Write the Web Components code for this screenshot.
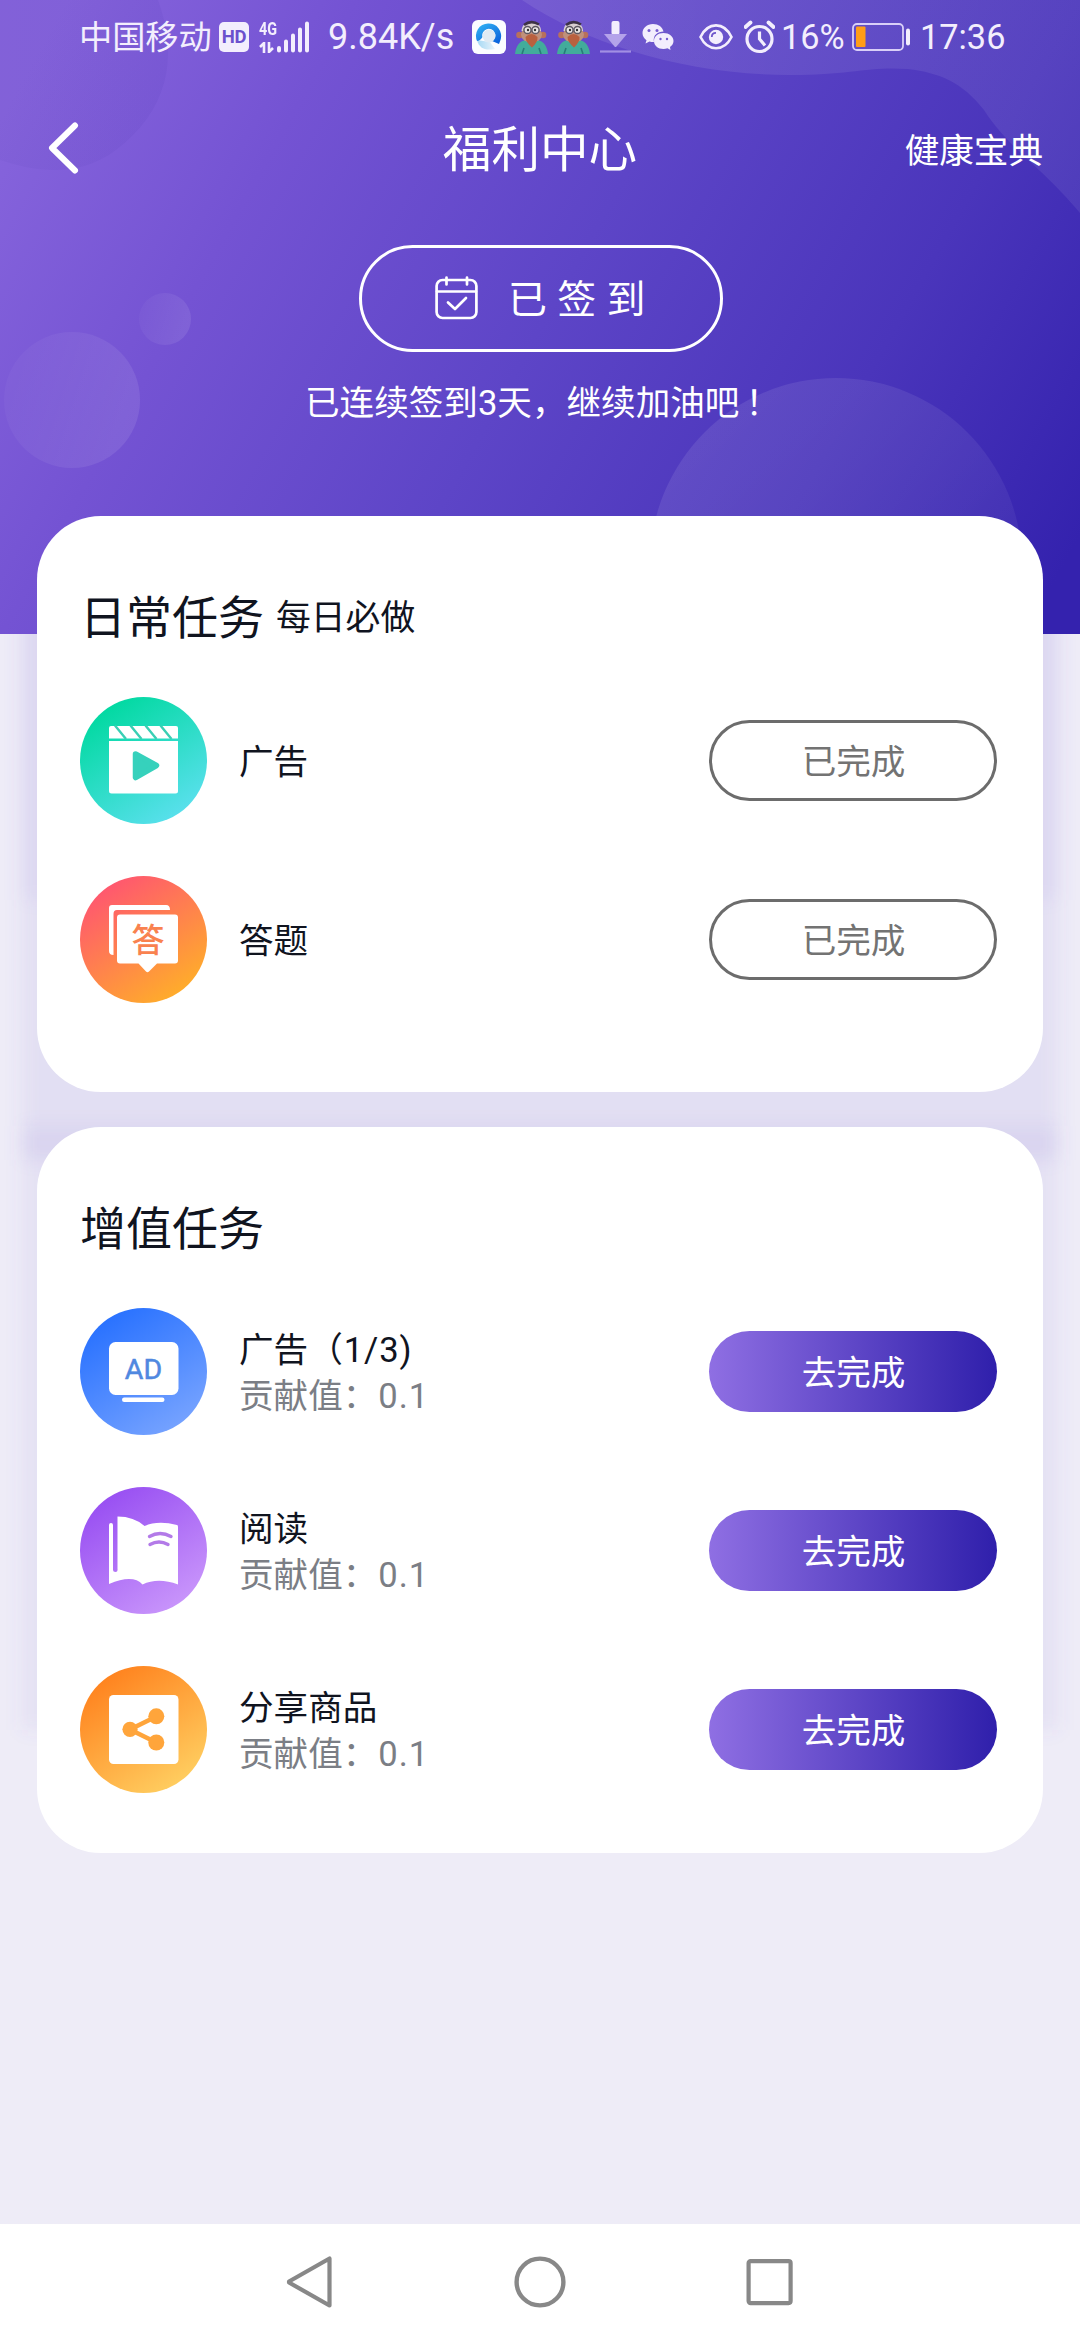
<!DOCTYPE html>
<html lang="zh-CN">
<head>
<meta charset="utf-8">
<title>福利中心</title>
<style>
html,body{margin:0;padding:0}
body{width:1080px;height:2340px;overflow:hidden;background:#eeecf7;font-family:Roboto,"Noto Sans CJK SC",sans-serif}
</style>
</head>
<body>
<welfare-page></welfare-page>
<script>
const define = (name, html) => {
  const t = document.createElement('template');
  t.innerHTML = html;
  customElements.define(name, class extends HTMLElement {
    constructor() {
      super();
      this.attachShadow({mode: 'open'}).append(t.content.cloneNode(true));
    }
  });
};

/* Purple header gradient with its bubbles, and the soft glow behind the cards */
define('page-backdrop', `
<style>:host{display:block}svg{display:block}</style>
<svg width="1080" height="2224" viewBox="0 0 1080 2224">
  <defs>
    <linearGradient id="h" gradientUnits="userSpaceOnUse" x1="0" y1="120" x2="1000" y2="680">
      <stop offset="0" stop-color="#8664dc"/><stop offset=".22" stop-color="#7453d3"/><stop offset=".5" stop-color="#5d45c7"/><stop offset=".77" stop-color="#4a35bb"/><stop offset="1" stop-color="#3422ae"/>
    </linearGradient>
    <linearGradient id="b" x1="0" y1="0" x2="1" y2="1"><stop offset="0" stop-color="#fff" stop-opacity=".1"/><stop offset=".5" stop-color="#fff" stop-opacity=".07"/><stop offset="1" stop-color="#fff" stop-opacity=".02"/></linearGradient>
    <linearGradient id="l" x1="0" y1="0" x2="1" y2=".3"><stop offset="0" stop-color="#fff" stop-opacity=".02"/><stop offset="1" stop-color="#fff" stop-opacity=".09"/></linearGradient>
    <linearGradient id="w" x1="0" y1="0" x2="1" y2="0"><stop offset="0" stop-color="#fff" stop-opacity=".09"/><stop offset="1" stop-color="#fff" stop-opacity=".07"/></linearGradient>
    <linearGradient id="d" x1="0" y1="0" x2="1" y2="0"><stop offset="0" stop-color="#5f46b8" stop-opacity=".1"/><stop offset="1" stop-color="#5036b4" stop-opacity=".11"/></linearGradient>
    <filter id="f" x="-10%" y="-10%" width="120%" height="120%"><feGaussianBlur stdDeviation="9"/></filter>
    <clipPath id="c"><rect width="1080" height="634"/></clipPath>
  </defs>
  <rect width="1080" height="2224" fill="#eeecf7"/>
  <g filter="url(#f)" fill="#6a55c8">
    <rect x="22" y="560" width="1036" height="600" fill-opacity=".085"/>
    <rect x="22" y="500" width="1036" height="400" fill-opacity=".06"/>
    <rect x="22" y="1126" width="1036" height="604" fill-opacity=".075"/>
  </g>
  <g clip-path="url(#c)">
    <rect width="1080" height="634" fill="url(#h)"/>
    <path d="M0 0H158C180 60 166 112 116 150C76 180 30 170 0 160Z" fill="url(#d)"/>
    <path d="M522 0C590 46 690 75 790 75C850 75 870 66 908 69C940 73 962 82 984 110C1010 150 1040 165 1080 213V0Z" fill="url(#w)"/>
    <circle cx="72" cy="400" r="68" fill="url(#l)"/>
    <circle cx="165" cy="319" r="26" fill="url(#l)"/>
    <circle cx="836" cy="564" r="186" fill="url(#b)"/>
  </g>
</svg>`);

/* Status bar emoji, used twice in the notification area */
define('troll-icon', `
<style>:host{display:block;flex:none}svg{display:block}</style>
<svg width="33" height="34" viewBox="0 0 33 34"><path d="M0 34C1 25 5 21 11 20H22C28 21 32 25 33 34Z" fill="#42ac9b"/><path d="M7 34l2-6M26 34l-2-6" stroke="#287c78" stroke-width="1.600"/><circle cx="4.500" cy="15" r="3.300" fill="#b8705c"/><circle cx="28" cy="15" r="3.300" fill="#b8705c"/><ellipse cx="16.500" cy="14.500" rx="10.500" ry="8" fill="#c0907c"/><path d="M6.500 11C7 4 11 2.500 16.500 2.500C22 2.500 26 5 26 11Z" fill="#d8cfd0"/><path d="M9 5Q16-.5 24 4.500" fill="none" stroke="#3d3346" stroke-width="2.600"/><circle cx="12.500" cy="10" r="3.600" fill="#ece8e6" stroke="#5e5963" stroke-width="1.500"/><circle cx="20.500" cy="10" r="3.600" fill="#ece8e6" stroke="#5e5963" stroke-width="1.500"/><circle cx="13" cy="10" r="1.200" fill="#333"/><circle cx="20" cy="10" r="1.200" fill="#333"/><path d="M10.500 17Q16.500 11 22.500 17Q23 22 17 27.500Q10.500 22 10.500 17Z" fill="#b9603f"/></svg>`);

define('status-bar', `
<style>
:host{display:flex;align-items:center;height:74px;padding-left:79px;color:#f3eefd;font-size:34.3px;line-height:42px;white-space:nowrap}
svg{display:block;flex:none}
.carrier{font-size:33.2px;width:140px;padding-top:1px}
.hd{display:flex;align-items:center;justify-content:center;width:30px;height:30px;border-radius:5px;background:#f3eefd;color:#6b50cd;font-size:18.5px;line-height:30px;font-weight:700;margin-right:10px;letter-spacing:-.3px}
.net{display:flex;flex-direction:column;justify-content:space-between;width:18px;height:32px;font-size:18px;line-height:16px;font-weight:700}
.net span{transform:scaleX(.8);transform-origin:left}
.speed{font-size:36px;width:144px}
</style>
<span class="carrier">中国移动</span>
<span class="hd">HD</span>
<div class="net"><span>4G</span>
<svg width="16" height="11" viewBox="0 0 16 11"><path d="M5 11V1L1 5M10 0V10L14 6" fill="none" stroke="#f3eefd" stroke-width="2.600"/></svg></div>
<svg width="51" height="32" viewBox="0 0 51 32"><path d="M2 29.500v-2.500M9 29.500V20.500M16 29.500V14.500M23 29.500V8.500M30 29.500V2.500" fill="none" stroke="#f3eefd" stroke-width="4" stroke-linecap="round"/></svg>
<span class="speed">9.84K/s</span>
<svg style="margin-right:9px" width="34" height="34" viewBox="0 0 34 34"><defs><linearGradient id="q" x1="0" y1="0" x2=".8" y2="1"><stop offset="0" stop-color="#35b8f5"/><stop offset="1" stop-color="#0a62dc"/></linearGradient><linearGradient id="q2" x1="0" y1="0" x2="1" y2="0"><stop offset="0" stop-color="#a5d8f4"/><stop offset="1" stop-color="#e9f3fa"/></linearGradient></defs><rect width="34" height="34" rx="6" fill="#fbfcff"/><path d="M5 20C7 28 13 31 23 29L18 22Z" fill="url(#q2)"/><path d="M5 21A12.600 12.600 0 1 1 28.500 20L27 24L20 21A6.500 6.500 0 1 0 10.500 17Q8 21 5 21Z" fill="url(#q)"/><circle cx="17" cy="16" r="6.500" fill="#dfeaf3"/></svg>
<troll-icon style="margin-right:9px"></troll-icon>
<troll-icon style="margin-right:10px"></troll-icon>
<svg style="margin-right:11px" width="31" height="34" viewBox="0 0 31 34"><rect x="11.500" y="1" width="8" height="14" rx="2" fill="#f3eefd"/><path d="M4 14H27L16.500 26.500Q15.500 27.500 14.500 26.500Z" fill="#b4a3ea"/><path d="M0 31.500H31" stroke="#a28fe3" stroke-width="2.200"/></svg>
<svg style="margin-right:25px" width="32" height="30" viewBox="0 0 32 30"><path d="M11 2C5 2 .5 6 .5 11C.5 14 2 16.500 4.500 18.200L3.500 21.500L7.500 19.500Q10 20.300 12 20C10.500 13 16 9.500 21.500 9.500C20.500 5 16.500 2 11 2Z" fill="#f3eefd"/><path d="M21.500 11C16 11 12 14.500 12 19C12 23.500 16 27 21.500 27Q23.500 27 25.500 26.300L28.500 28L28 25C30 23.500 31.500 21.500 31.500 19C31.500 14.500 27 11 21.500 11Z" fill="#f3eefd"/><g fill="#765ccf"><circle cx="7" cy="8.500" r="1.500"/><circle cx="15" cy="8.500" r="1.500"/><circle cx="18.500" cy="17" r="1.200"/><circle cx="25" cy="17" r="1.200"/></g></svg>
<svg style="margin-right:11px" width="34" height="28" viewBox="0 0 34 28"><path d="M1.500 14C9-1.500 25-1.500 32.500 14C25 29 9 29 1.500 14Z" fill="none" stroke="#f3eefd" stroke-width="2.600"/><circle cx="17" cy="14" r="7.200" fill="#f3eefd"/><path d="M12.800 14Q12.800 9.800 17 9.800" fill="none" stroke="#6e55cb" stroke-width="1.800"/></svg>
<svg style="margin-right:6px" width="31" height="34" viewBox="0 0 31 34"><circle cx="15.500" cy="19" r="12.500" fill="none" stroke="#f3eefd" stroke-width="3.200"/><path d="M15.500 11.500V19L21 25.500" fill="none" stroke="#f3eefd" stroke-width="3.200"/><path d="M1.500 7L6.500 2.500M29.500 7L24.500 2.500" stroke="#f3eefd" stroke-width="3.800" stroke-linecap="round"/></svg>
<span style="width:71px">16%</span>
<svg style="margin-right:9px" width="59" height="28" viewBox="0 0 59 28"><rect x="1" y="1" width="50" height="26" rx="4" fill="none" stroke="#d9cff8" stroke-width="1.800"/><rect x="4" y="3.500" width="9.500" height="20.500" rx="1" fill="#ff9d17"/><rect x="54" y="5.500" width="4" height="17" rx="2" fill="#f3eefd"/></svg>
<span>17:36</span>`);

define('page-header', `
<style>
:host{display:grid;grid-template-columns:1fr auto 1fr;align-items:center;height:150px;padding:0 37px 0 47px;color:#fff;box-sizing:border-box}
svg{display:block;margin-top:-2px}
.title{font-size:48.6px;line-height:60px;padding:3px 10px 0 0}
.right{justify-self:end;font-size:34.6px;line-height:50px;padding-top:3px}
</style>
<svg width="32" height="52" viewBox="0 0 32 52"><path d="M28 3.500L5 26L28 48.500" fill="none" stroke="#fff" stroke-width="6" stroke-linecap="round" stroke-linejoin="round"/></svg>
<span class="title"><slot></slot></span>
<span class="right"><slot name="link"></slot></span>`);

define('sign-in', `
<style>
:host{display:flex;flex-direction:column;align-items:center;color:#fff}
.pill{box-sizing:border-box;display:flex;align-items:center;width:364px;height:107px;border:3px solid #fff;border-radius:54px;padding-left:73px;gap:30px;font-size:38.9px;letter-spacing:10.4px;line-height:56px;margin-left:2px}
.pill svg{display:block;flex:none;margin-top:-2px}
.pill span{padding-top:2px}
p{margin:26px 0 0;padding-left:5px;font-size:34.6px;line-height:50px;white-space:nowrap}
</style>
<div class="pill">
<svg width="43" height="44" viewBox="0 0 43 44"><g fill="none" stroke="#fff" stroke-width="2.700" stroke-linecap="round" stroke-linejoin="round"><rect x="1.600" y="4" width="39.800" height="38" rx="6"/><path d="M2 15.500H41M11.500 1.500V8.500M32 1.500V8.500"/><path d="M13 26.500L20 33L31 22"/></g></svg>
<span>已签到</span></div>
<p><slot></slot></p>`);

define('task-card', `
<style>
:host{display:block;box-sizing:border-box;margin:0 37px;padding:70px 46px 0 43px;border-radius:64px;background:#fff;color:#10141f}
header{display:flex;align-items:center;height:64px;gap:12px;margin-bottom:47px}
.h{font-size:46px;line-height:64px}
.s{font-size:34.8px;line-height:50px}
.list{display:flex;flex-direction:column;gap:52px}
</style>
<header><span class="h"><slot name="title"></slot></span><span class="s"><slot name="note"></slot></span></header>
<div class="list"><slot></slot></div>`);

define('task-row', `
<style>
:host{display:flex;align-items:center;height:127px}
.text{flex:1;margin-left:32px;font-size:34.6px;line-height:46px;padding-top:3px}
.sub{color:#7b7e85}
::slotted([slot=icon]){flex:none}
</style>
<slot name="icon"></slot>
<div class="text"><div><slot></slot></div><div class="sub"><slot name="sub"></slot></div></div>
<slot name="action"></slot>`);

define('task-button', `
<style>
:host{box-sizing:border-box;display:flex;align-items:center;justify-content:center;width:288px;height:81px;border-radius:41px;font-size:34.6px;line-height:50px;color:#fff;background:linear-gradient(90deg,#8f6fe3 0,#2f1fab 100%);padding:3px 0 0 1px}
:host([done]){background:#fff;border:3px solid #6c6c6c;color:#737373}
</style><slot></slot>`);

const ICONS = {
  video: ['#00d9a0', '#5ce0ef', `<path d="M31 29H96Q98 29 98 31V41.500H29V31Q29 29 31 29Z" fill="#fff"/><path d="M29 44H98V94Q98 96.500 95.500 96.500H31.500Q29 96.500 29 94Z" fill="#fff"/><path d="M35 28.500L46 42M50.500 28.500L61.500 42M65.500 28.500L76.500 42M80.500 28.500L91.500 42" stroke="#39cfb4" stroke-width="2.400"/><path d="M55.500 57L76.500 68.500L55.500 80.500Z" fill="#36d1bc" stroke="#36d1bc" stroke-width="5.500" stroke-linejoin="round"/>`],
  quiz: ['#ff5670', '#ffb028', `<path d="M32 29H86Q90 29 90 34H37Q33.500 34 33.500 38V79Q29 79 29 75V32Q29 29 32 29Z" fill="#fff"/><path d="M40 38.500H95Q98 38.500 98 41.500V84.500Q98 87.500 95 87.500H77L69 95.500Q67.500 97 66 95.500L58.500 87.500H40Q37 87.500 37 84.500V41.500Q37 38.500 40 38.500Z" fill="#fff"/><text x="68" y="75.500" text-anchor="middle" font-size="33" font-weight="500" fill="#f9824f">答</text>`],
  ad: ['#2871ff', '#78a4ff', `<rect x="29" y="34" width="69.500" height="53" rx="6.500" fill="#fff"/><text x="63.500" y="71" text-anchor="middle" font-size="28.500" font-weight="400" fill="#5088e0" stroke="#5088e0" stroke-width=".5">AD</text><rect x="42" y="89.500" width="42.500" height="4.500" rx="2.200" fill="#fff"/>`],
  book: ['#984ff2', '#ca97fb', `<path d="M29 97V38Q29 36 31 36Q33 36 33 38V83Q33 85 35.500 85Q38 85 37.500 82V29.500Q54 29.500 64.500 39Q78 33 97 38Q98 38 98 40V97.500Q78 90 62.500 97.500Q53 87 29 97Z" fill="#fff"/><path d="M69.500 49.500Q80 43.500 91 49.500M70 57.500Q79 52.500 88 57.500" fill="none" stroke="#b37ae8" stroke-width="3.400" stroke-linecap="round"/>`],
  share: ['#ff821e', '#ffd062', `<rect x="29" y="29" width="69.500" height="69" rx="4.500" fill="#fff"/><path d="M76.300 50.500L50 63.500L76.300 76.500" fill="none" stroke="#ffa53b" stroke-width="4.600"/><g fill="#ffa53b"><circle cx="50" cy="63.300" r="7.600"/><circle cx="76.300" cy="50.300" r="8"/><circle cx="76.300" cy="76.500" r="8"/></g>`]
};
customElements.define('task-icon', class extends HTMLElement {
  constructor() { super(); this.attachShadow({mode: 'open'}); }
  connectedCallback() {
    const [a, b, art] = ICONS[this.getAttribute('name')];
    this.shadowRoot.innerHTML = `<style>:host{display:block;width:127px;height:127px}svg{display:block}</style>
<svg width="127" height="127" viewBox="0 0 127 127"><defs><linearGradient id="g" x1=".15" y1=".1" x2=".75" y2="1"><stop offset="0" stop-color="${a}"/><stop offset="1" stop-color="${b}"/></linearGradient></defs><circle cx="63.500" cy="63.500" r="63.500" fill="url(#g)"/>${art}</svg>`;
  }
});

define('system-nav', `
<style>
:host{display:grid;grid-template-columns:repeat(3,56px);justify-content:center;gap:174px;align-items:center;height:116px;background:#fff}
svg{display:block}
</style>
<svg width="56" height="56" viewBox="0 0 56 56"><path d="M47.500 4.500V51.500L7 28.500V27.500Z" fill="none" stroke="#888" stroke-width="4.200" stroke-linejoin="round"/></svg>
<svg width="56" height="56" viewBox="0 0 56 56"><circle cx="28" cy="28" r="23.400" fill="none" stroke="#888" stroke-width="4.400"/></svg>
<svg width="56" height="56" viewBox="0 0 56 56"><rect x="6.600" y="7.100" width="42" height="42" rx="2" fill="none" stroke="#888" stroke-width="4.200"/></svg>`);

define('welfare-page', `
<style>
:host{display:grid;grid-template:2224px 116px / 1080px;width:1080px;height:2340px}
page-backdrop,main{grid-area:1/1}
main{display:flex;flex-direction:column;z-index:1}
sign-in{margin-top:21px;height:271px}
.bang{padding-left:6px}
.num{letter-spacing:.9px;padding-left:1px}
.daily{height:576px;margin-bottom:35px}
.bonus{height:726px}
system-nav{grid-area:2/1}
</style>
<page-backdrop></page-backdrop>
<main>
  <status-bar></status-bar>
  <page-header>福利中心<span slot="link">健康宝典</span></page-header>
  <sign-in>已连续签到3天，继续加油吧<span class="bang">！</span></sign-in>
  <task-card class="daily"><span slot="title">日常任务</span><span slot="note">每日必做</span>
    <task-row><task-icon slot="icon" name="video"></task-icon>广告<task-button slot="action" done>已完成</task-button></task-row>
    <task-row><task-icon slot="icon" name="quiz"></task-icon>答题<task-button slot="action" done>已完成</task-button></task-row>
  </task-card>
  <task-card class="bonus"><span slot="title">增值任务</span>
    <task-row><task-icon slot="icon" name="ad"></task-icon>广告（<span class="num">1/3)</span><span slot="sub">贡献值：<span class="num">0.1</span></span><task-button slot="action">去完成</task-button></task-row>
    <task-row><task-icon slot="icon" name="book"></task-icon>阅读<span slot="sub">贡献值：<span class="num">0.1</span></span><task-button slot="action">去完成</task-button></task-row>
    <task-row><task-icon slot="icon" name="share"></task-icon>分享商品<span slot="sub">贡献值：<span class="num">0.1</span></span><task-button slot="action">去完成</task-button></task-row>
  </task-card>
</main>
<system-nav></system-nav>`);
</script>
</body>
</html>
